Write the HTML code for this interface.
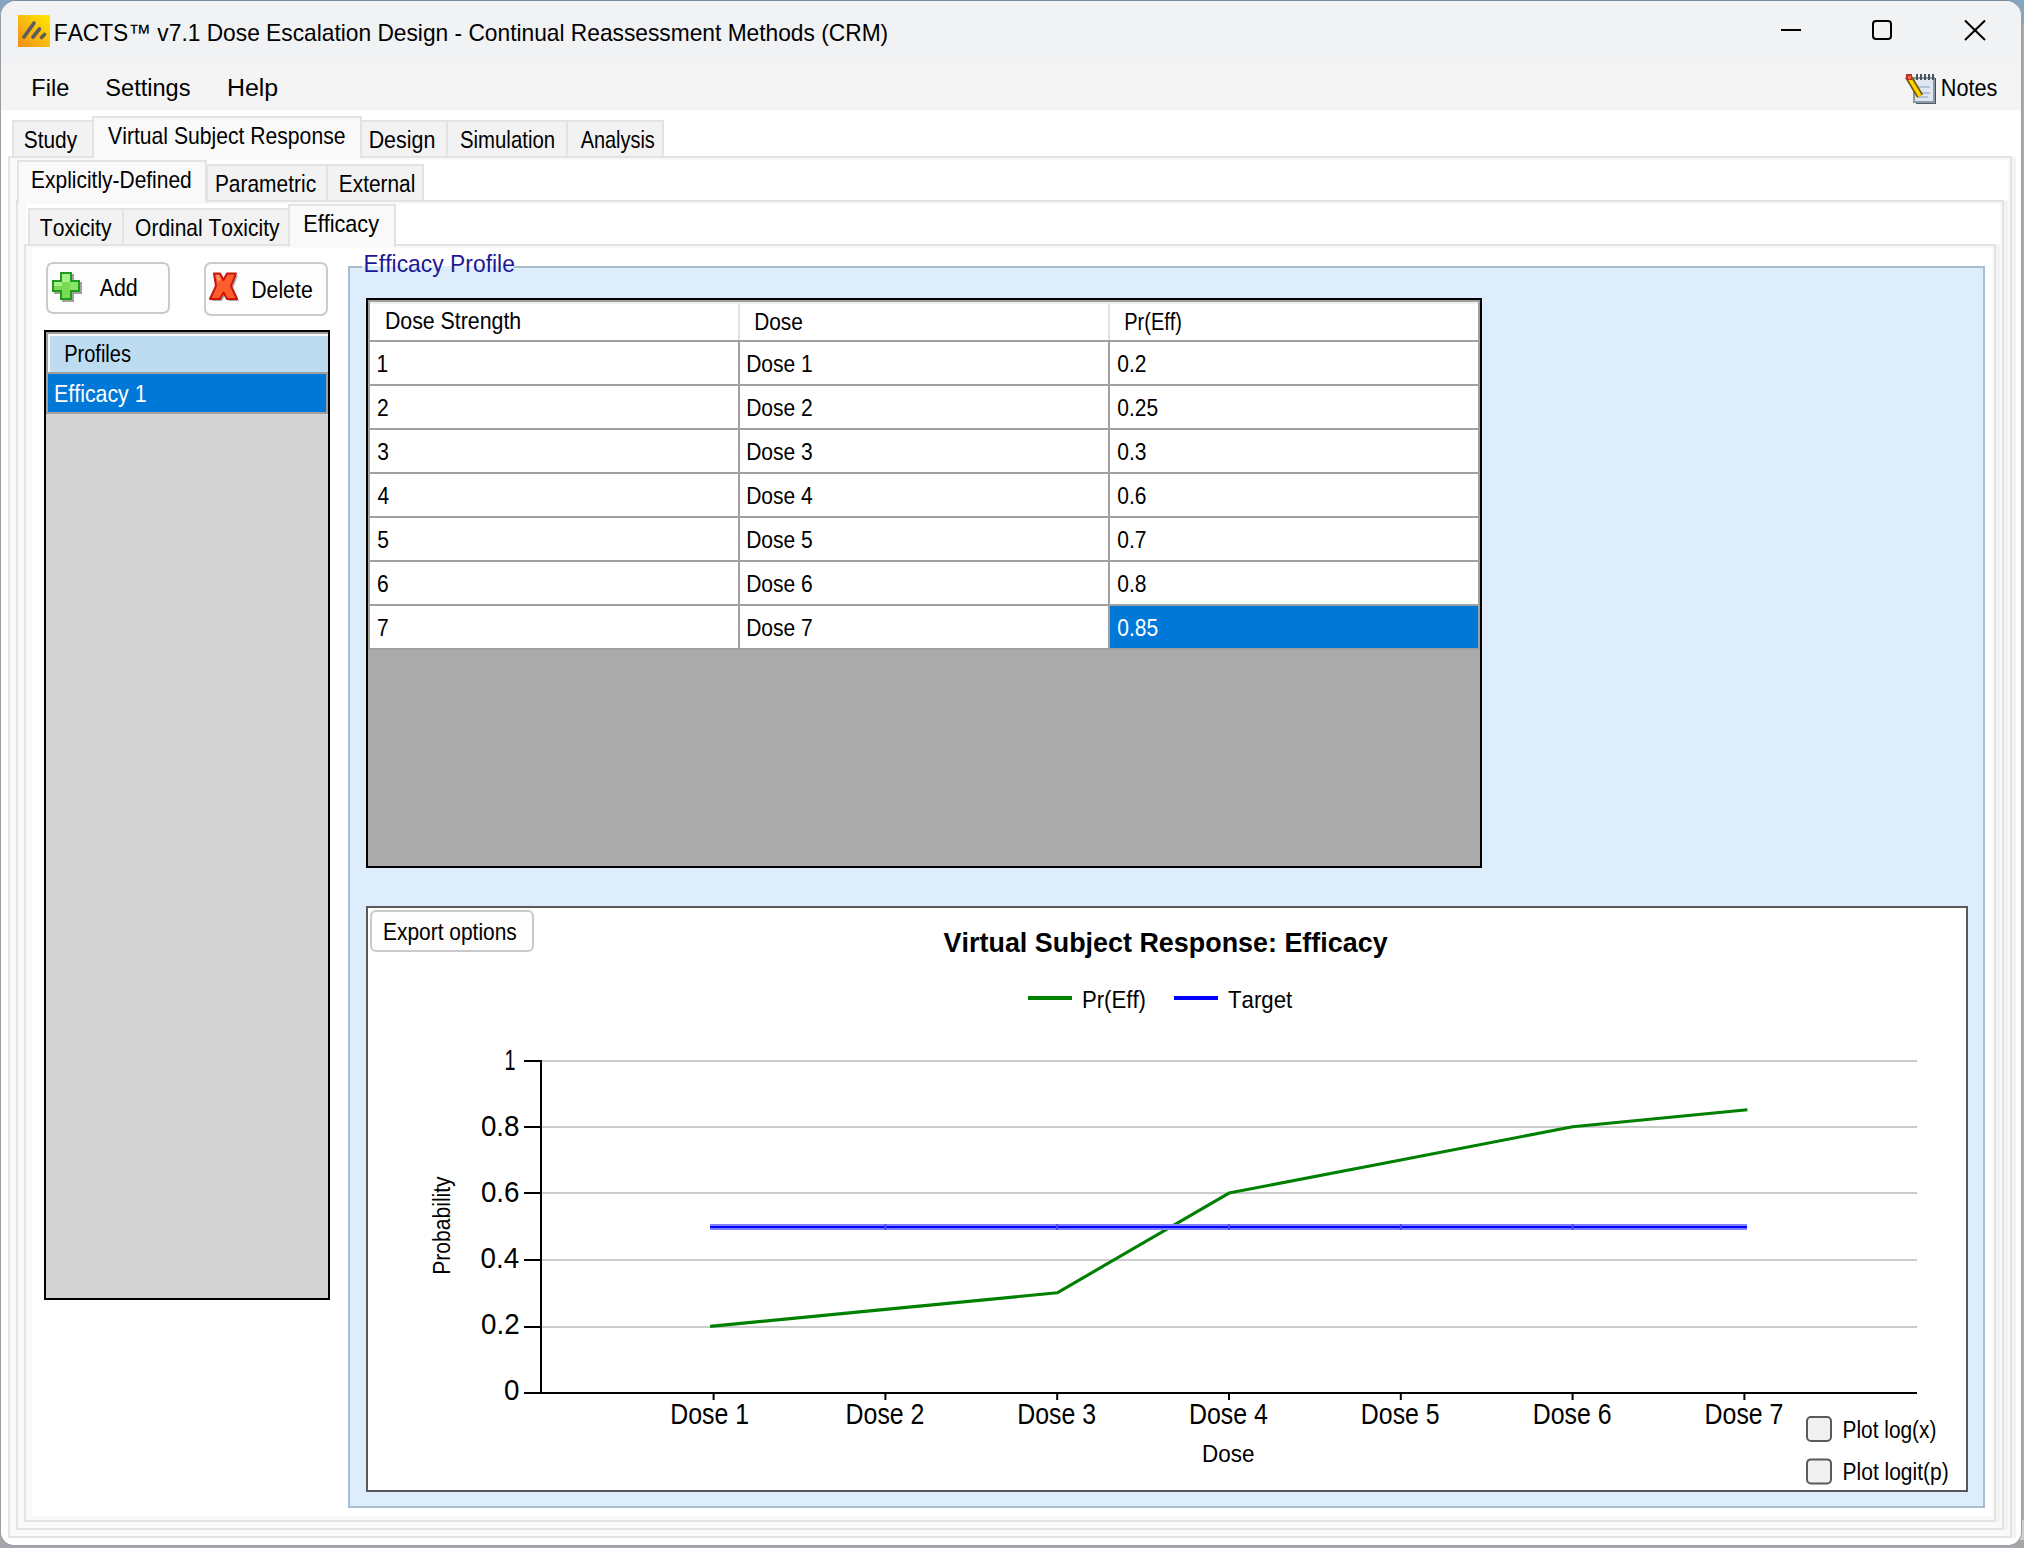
<!DOCTYPE html>
<html><head><meta charset="utf-8"><style>
html,body{margin:0;padding:0;width:2024px;height:1548px;overflow:hidden;position:relative;background:#8aa0b4}
svg text{font-family:"Liberation Sans",sans-serif;font-kerning:none;}
</style></head><body>
<div style="position:absolute;left:0px;top:0px;width:2024px;height:1548px;box-sizing:border-box;background:#aaaaaa;"></div>
<div style="position:absolute;left:0px;top:0px;width:2024px;height:24px;box-sizing:border-box;background:#86a6c0;"></div>
<div style="position:absolute;left:1990px;top:1520px;width:34px;height:28px;box-sizing:border-box;background:#cdcdcd;"></div>
<div style="position:absolute;left:0px;top:1540px;width:2024px;height:8px;box-sizing:border-box;background:#a4a8ac;"></div>
<div style="position:absolute;left:0;top:0;width:2022px;height:1546px;box-sizing:border-box;border:1.5px solid #9a9ea2;border-top-color:#77899a;border-radius:16px 16px 14px 14px;background:#fff;overflow:hidden"><div style="position:absolute;left:0;top:0;width:2024px;height:61px;background:#f1f2f4"></div><div style="position:absolute;left:0;top:61px;width:2024px;height:48px;background:#f4f4f4"></div></div>
<div style="position:absolute;left:8px;top:156px;width:2004px;height:1382px;box-sizing:border-box;background:#f9f9f9;border:2px solid #e3e3e3;"></div>
<div style="position:absolute;left:2012px;top:157px;width:4px;height:1381px;box-sizing:border-box;background:#f3f3f3;"></div>
<div style="position:absolute;left:12px;top:120px;width:82px;height:36px;box-sizing:border-box;background:#f2f2f2;border-left:2px solid #e3e3e3;border-top:2px solid #e3e3e3;border-right:2px solid #e3e3e3;"></div>
<div style="position:absolute;left:360px;top:120px;width:88px;height:36px;box-sizing:border-box;background:#f2f2f2;border-left:2px solid #e3e3e3;border-top:2px solid #e3e3e3;border-right:2px solid #e3e3e3;"></div>
<div style="position:absolute;left:446px;top:120px;width:122px;height:36px;box-sizing:border-box;background:#f2f2f2;border-left:2px solid #e3e3e3;border-top:2px solid #e3e3e3;border-right:2px solid #e3e3e3;"></div>
<div style="position:absolute;left:566px;top:120px;width:98px;height:36px;box-sizing:border-box;background:#f2f2f2;border-left:2px solid #e3e3e3;border-top:2px solid #e3e3e3;border-right:2px solid #e3e3e3;"></div>
<div style="position:absolute;left:92px;top:116px;width:270px;height:42px;box-sizing:border-box;background:#f9f9f9;border-left:2px solid #e3e3e3;border-top:2px solid #e3e3e3;border-right:2px solid #e3e3e3;"></div>
<div style="position:absolute;left:18px;top:160px;width:1990px;height:40px;box-sizing:border-box;background:#fff;"></div>
<div style="position:absolute;left:16px;top:200px;width:1988px;height:1330px;box-sizing:border-box;background:#f9f9f9;border:2px solid #e3e3e3;"></div>
<div style="position:absolute;left:2004px;top:201px;width:4px;height:1329px;box-sizing:border-box;background:#f3f3f3;"></div>
<div style="position:absolute;left:206px;top:164px;width:122px;height:36px;box-sizing:border-box;background:#f2f2f2;border-left:2px solid #e3e3e3;border-top:2px solid #e3e3e3;border-right:2px solid #e3e3e3;"></div>
<div style="position:absolute;left:326px;top:164px;width:98px;height:36px;box-sizing:border-box;background:#f2f2f2;border-left:2px solid #e3e3e3;border-top:2px solid #e3e3e3;border-right:2px solid #e3e3e3;"></div>
<div style="position:absolute;left:17px;top:160px;width:190px;height:43px;box-sizing:border-box;background:#f9f9f9;border-left:2px solid #e3e3e3;border-top:2px solid #e3e3e3;border-right:2px solid #e3e3e3;"></div>
<div style="position:absolute;left:26px;top:204px;width:1974px;height:40px;box-sizing:border-box;background:#fff;"></div>
<div style="position:absolute;left:24px;top:244px;width:1972px;height:1278px;box-sizing:border-box;background:#f9f9f9;border:2px solid #e3e3e3;"></div>
<div style="position:absolute;left:1996px;top:245px;width:4px;height:1277px;box-sizing:border-box;background:#f3f3f3;"></div>
<div style="position:absolute;left:32px;top:248px;width:1960px;height:1268px;box-sizing:border-box;background:#fff;"></div>
<div style="position:absolute;left:28px;top:208px;width:96px;height:36px;box-sizing:border-box;background:#f2f2f2;border-left:2px solid #e3e3e3;border-top:2px solid #e3e3e3;border-right:2px solid #e3e3e3;"></div>
<div style="position:absolute;left:122px;top:208px;width:168px;height:36px;box-sizing:border-box;background:#f2f2f2;border-left:2px solid #e3e3e3;border-top:2px solid #e3e3e3;border-right:2px solid #e3e3e3;"></div>
<div style="position:absolute;left:288px;top:204px;width:108px;height:43px;box-sizing:border-box;background:#f9f9f9;border-left:2px solid #e3e3e3;border-top:2px solid #e3e3e3;border-right:2px solid #e3e3e3;"></div>
<div style="position:absolute;left:46px;top:262px;width:124px;height:52px;box-sizing:border-box;background:#fdfdfd;border:2px solid #cbcbcb;border-radius:7px;"></div>
<div style="position:absolute;left:204px;top:262px;width:124px;height:54px;box-sizing:border-box;background:#fdfdfd;border:2px solid #cbcbcb;border-radius:7px;"></div>
<div style="position:absolute;left:44px;top:330px;width:286px;height:970px;box-sizing:border-box;background:#d3d3d3;border:2px solid #000;"></div>
<div style="position:absolute;left:46px;top:332px;width:282px;height:2px;box-sizing:border-box;background:#a0a0a0;"></div>
<div style="position:absolute;left:46px;top:332px;width:2px;height:82px;box-sizing:border-box;background:#a0a0a0;"></div>
<div style="position:absolute;left:48px;top:334px;width:280px;height:2px;box-sizing:border-box;background:#f8f8f8;"></div>
<div style="position:absolute;left:48px;top:334px;width:2px;height:38px;box-sizing:border-box;background:#f8f8f8;"></div>
<div style="position:absolute;left:50px;top:336px;width:278px;height:36px;box-sizing:border-box;background:#bddcf2;"></div>
<div style="position:absolute;left:46px;top:372px;width:282px;height:2px;box-sizing:border-box;background:#a0a0a0;"></div>
<div style="position:absolute;left:48px;top:374px;width:278px;height:38px;box-sizing:border-box;background:#0078d7;"></div>
<div style="position:absolute;left:326px;top:374px;width:2px;height:40px;box-sizing:border-box;background:#a0a0a0;"></div>
<div style="position:absolute;left:46px;top:412px;width:282px;height:2px;box-sizing:border-box;background:#a0a0a0;"></div>
<div style="position:absolute;left:348px;top:266px;width:1637px;height:1242px;box-sizing:border-box;background:#deedfc;border:2px solid #a9bcd1;"></div>
<div style="position:absolute;left:362px;top:264px;width:152px;height:5px;box-sizing:border-box;background:#deedfc;"></div>
<div style="position:absolute;left:362px;top:250px;width:152px;height:16px;box-sizing:border-box;background:#fff;"></div>
<div style="position:absolute;left:366px;top:298px;width:1116px;height:570px;box-sizing:border-box;background:#ababab;border:2px solid #000;"></div>
<div style="position:absolute;left:368px;top:300px;width:1112px;height:2px;box-sizing:border-box;background:#a0a0a0;"></div>
<div style="position:absolute;left:368px;top:300px;width:2px;height:350px;box-sizing:border-box;background:#a0a0a0;"></div>
<div style="position:absolute;left:1478px;top:300px;width:2px;height:350px;box-sizing:border-box;background:#a0a0a0;"></div>
<div style="position:absolute;left:370px;top:302px;width:1108px;height:38px;box-sizing:border-box;background:#ffffff;"></div>
<div style="position:absolute;left:370px;top:302px;width:1108px;height:2px;box-sizing:border-box;background:#f0f0f0;"></div>
<div style="position:absolute;left:738px;top:304px;width:2px;height:36px;box-sizing:border-box;background:#e2e2e2;"></div>
<div style="position:absolute;left:1108px;top:304px;width:2px;height:36px;box-sizing:border-box;background:#e2e2e2;"></div>
<div style="position:absolute;left:370px;top:340px;width:1108px;height:2px;box-sizing:border-box;background:#a0a0a0;"></div>
<div style="position:absolute;left:370px;top:342px;width:1108px;height:42px;box-sizing:border-box;background:#fff;"></div>
<div style="position:absolute;left:370px;top:384px;width:1108px;height:2px;box-sizing:border-box;background:#a0a0a0;"></div>
<div style="position:absolute;left:370px;top:386px;width:1108px;height:42px;box-sizing:border-box;background:#fff;"></div>
<div style="position:absolute;left:370px;top:428px;width:1108px;height:2px;box-sizing:border-box;background:#a0a0a0;"></div>
<div style="position:absolute;left:370px;top:430px;width:1108px;height:42px;box-sizing:border-box;background:#fff;"></div>
<div style="position:absolute;left:370px;top:472px;width:1108px;height:2px;box-sizing:border-box;background:#a0a0a0;"></div>
<div style="position:absolute;left:370px;top:474px;width:1108px;height:42px;box-sizing:border-box;background:#fff;"></div>
<div style="position:absolute;left:370px;top:516px;width:1108px;height:2px;box-sizing:border-box;background:#a0a0a0;"></div>
<div style="position:absolute;left:370px;top:518px;width:1108px;height:42px;box-sizing:border-box;background:#fff;"></div>
<div style="position:absolute;left:370px;top:560px;width:1108px;height:2px;box-sizing:border-box;background:#a0a0a0;"></div>
<div style="position:absolute;left:370px;top:562px;width:1108px;height:42px;box-sizing:border-box;background:#fff;"></div>
<div style="position:absolute;left:370px;top:604px;width:1108px;height:2px;box-sizing:border-box;background:#a0a0a0;"></div>
<div style="position:absolute;left:370px;top:606px;width:1108px;height:42px;box-sizing:border-box;background:#fff;"></div>
<div style="position:absolute;left:370px;top:648px;width:1108px;height:2px;box-sizing:border-box;background:#a0a0a0;"></div>
<div style="position:absolute;left:738px;top:342px;width:2px;height:308px;box-sizing:border-box;background:#a0a0a0;"></div>
<div style="position:absolute;left:1108px;top:342px;width:2px;height:308px;box-sizing:border-box;background:#a0a0a0;"></div>
<div style="position:absolute;left:1110px;top:606px;width:368px;height:42px;box-sizing:border-box;background:#0078d7;"></div>
<div style="position:absolute;left:366px;top:906px;width:1602px;height:586px;box-sizing:border-box;background:#fff;border:2px solid #595959;"></div>
<div style="position:absolute;left:370px;top:910px;width:164px;height:42px;box-sizing:border-box;background:#fdfdfd;border:2px solid #c9c9c9;border-radius:6px;"></div>
<svg style="position:absolute;left:0;top:0" width="2024" height="1548">
<defs><linearGradient id="ig" x1="0" y1="1" x2="1" y2="0"><stop offset="0" stop-color="#f48c1c"/><stop offset="1" stop-color="#ffec00"/></linearGradient></defs>
<rect x="18" y="15" width="32" height="32" fill="url(#ig)"/>
<g stroke="#5c5c5c" stroke-width="3.6" stroke-linecap="round"><line x1="24" y1="37" x2="34" y2="23"/><line x1="33" y1="37" x2="39.5" y2="29"/><line x1="41.5" y1="37.5" x2="44.5" y2="34.5"/></g>
<rect x="1781" y="29" width="20" height="2" fill="#000"/>
<rect x="1873" y="21" width="18" height="18" rx="3" fill="none" stroke="#000" stroke-width="2"/>
<g stroke="#000" stroke-width="2"><line x1="1965" y1="20.5" x2="1985" y2="40"/><line x1="1985" y1="20.5" x2="1965" y2="40"/></g>
<g transform="translate(1906,74)">
<rect x="26" y="4" width="4" height="26" fill="#3e4a54"/>
<rect x="10" y="26" width="20" height="4" fill="#4e5a64"/>
<rect x="8" y="4" width="20" height="24" fill="#dfe6f0"/>
<rect x="8" y="4" width="20" height="24" fill="none" stroke="#8d99a5" stroke-width="2"/>
<rect x="12" y="12" width="12" height="2" fill="#b4c4d8"/><rect x="12" y="18" width="12" height="2" fill="#b4c4d8"/><rect x="12" y="22" width="10" height="2" fill="#b4c4d8"/>
<g fill="#4a545e"><rect x="10" y="0" width="2" height="6"/><rect x="14" y="0" width="2" height="6"/><rect x="18" y="0" width="2" height="6"/><rect x="22" y="0" width="2" height="6"/><rect x="26" y="0" width="2" height="6"/></g>
<line x1="2" y1="2" x2="14" y2="22" stroke="#6e5200" stroke-width="7"/>
<line x1="2" y1="2" x2="14" y2="22" stroke="#ffd200" stroke-width="3.5"/>
<rect x="0" y="0" width="6" height="6" fill="#b8302a"/>
<rect x="2" y="2" width="3" height="3" fill="#ff6050"/>
</g>
<g transform="translate(52,272)">
<path d="M8 0h12v8h8v12h-8v8h-12v-8h-8v-12h8z" fill="#555" opacity="0.55" transform="translate(2,2)"/>
<path d="M8 0h12v8h8v12h-8v8h-12v-8h-8v-12h8z" fill="#1f9b1f"/>
<path d="M10 2h8v8h8v8h-8v8h-8v-8h-8v-8h8z" fill="#7ada52"/>
<path d="M10 2h8v8h-8zM2 10h8v4h-8z" fill="#a8f08a"/>
<path d="M18 10h8v8h-8z" fill="#8ae466"/>
</g>
<g transform="translate(210,272)">
<path d="M4 1.5H10L13.5 8L17 1.5H26L21 14L27 27H17L13.5 20.5L10 27H0L6 14Z" fill="#555" opacity="0.5" transform="translate(2,2)"/>
<path d="M4 1.5H10L13.5 8L17 1.5H26L21 14L27 27H17L13.5 20.5L10 27H0L6 14Z" fill="#ff5e2c" stroke="#c8160c" stroke-width="2" stroke-linejoin="round"/>
<path d="M5.5 3H9L11 7L8 10Z" fill="#ff9070"/>
</g>
<rect x="1028" y="996" width="44" height="4" fill="#008000"/>
<rect x="1174" y="996" width="44" height="4" fill="#0000ff"/>
<rect x="542" y="1060" width="1375" height="2" fill="#cccccc"/>
<rect x="524" y="1060" width="16" height="2" fill="#000"/>
<rect x="542" y="1126" width="1375" height="2" fill="#cccccc"/>
<rect x="524" y="1126" width="16" height="2" fill="#000"/>
<rect x="542" y="1192" width="1375" height="2" fill="#cccccc"/>
<rect x="524" y="1192" width="16" height="2" fill="#000"/>
<rect x="542" y="1259" width="1375" height="2" fill="#cccccc"/>
<rect x="524" y="1259" width="16" height="2" fill="#000"/>
<rect x="542" y="1326" width="1375" height="2" fill="#cccccc"/>
<rect x="524" y="1326" width="16" height="2" fill="#000"/>
<rect x="524" y="1392" width="16" height="2" fill="#000"/>
<rect x="540" y="1060" width="2" height="333" fill="#000"/>
<rect x="524" y="1392" width="1393" height="2" fill="#000"/>
<rect x="712.6" y="1393" width="2" height="7" fill="#000"/>
<rect x="884.4" y="1393" width="2" height="7" fill="#000"/>
<rect x="1056.2" y="1393" width="2" height="7" fill="#000"/>
<rect x="1228.0" y="1393" width="2" height="7" fill="#000"/>
<rect x="1399.8" y="1393" width="2" height="7" fill="#000"/>
<rect x="1571.6" y="1393" width="2" height="7" fill="#000"/>
<rect x="1743.4" y="1393" width="2" height="7" fill="#000"/>
<polyline points="710.1,1326.4 885.4,1309.4 1057.2,1292.8 1229.0,1193.1 1400.8,1159.9 1572.6,1126.7 1747.4,1109.8" fill="none" stroke="#008000" stroke-width="3.1" stroke-linejoin="round"/>
<rect x="710" y="1224" width="1037" height="6" fill="#8080ff"/>
<rect x="710" y="1226" width="1037" height="2" fill="#0000ff"/>
<rect x="884.4" y="1224" width="2" height="6" fill="#4848ff"/>
<rect x="1056.2" y="1224" width="2" height="6" fill="#4848ff"/>
<rect x="1228.0" y="1224" width="2" height="6" fill="#4848ff"/>
<rect x="1399.8" y="1224" width="2" height="6" fill="#4848ff"/>
<rect x="1571.6" y="1224" width="2" height="6" fill="#4848ff"/>
<rect x="1807" y="1417.0" width="24" height="24" rx="4" fill="#f0f0f0" stroke="#5a5a5a" stroke-width="2"/>
<rect x="1807" y="1459.4" width="24" height="24" rx="4" fill="#f0f0f0" stroke="#5a5a5a" stroke-width="2"/>
<text transform="translate(53.73,40.90) scale(0.9485,1)" font-size="24" fill="#000">FACTS™ v7.1 Dose Escalation Design - Continual Reassessment Methods (CRM)</text>
<text transform="translate(31.37,95.60) scale(0.9793,1)" font-size="24" fill="#000">File</text>
<text transform="translate(105.33,95.60) scale(0.9828,1)" font-size="24" fill="#000">Settings</text>
<text transform="translate(226.95,95.60) scale(1.0392,1)" font-size="24" fill="#000">Help</text>
<text transform="translate(1940.82,95.90) scale(0.9038,1)" font-size="24" fill="#000">Notes</text>
<text transform="translate(23.75,148.00) scale(0.8699,1)" font-size="24" fill="#000">Study</text>
<text transform="translate(108.11,143.80) scale(0.8811,1)" font-size="24" fill="#000">Virtual Subject Response</text>
<text transform="translate(368.64,147.70) scale(0.8935,1)" font-size="24" fill="#000">Design</text>
<text transform="translate(459.97,147.70) scale(0.8491,1)" font-size="24" fill="#000">Simulation</text>
<text transform="translate(580.66,147.70) scale(0.8298,1)" font-size="24" fill="#000">Analysis</text>
<text transform="translate(31.08,187.80) scale(0.8734,1)" font-size="24" fill="#000">Explicitly-Defined</text>
<text transform="translate(214.88,191.80) scale(0.8728,1)" font-size="24" fill="#000">Parametric</text>
<text transform="translate(338.79,191.80) scale(0.8701,1)" font-size="24" fill="#000">External</text>
<text transform="translate(39.83,236.10) scale(0.8805,1)" font-size="24" fill="#000">Toxicity</text>
<text transform="translate(135.11,236.10) scale(0.8734,1)" font-size="24" fill="#000">Ordinal Toxicity</text>
<text transform="translate(303.22,231.70) scale(0.9024,1)" font-size="24" fill="#000">Efficacy</text>
<text transform="translate(99.66,296.00) scale(0.8927,1)" font-size="24" fill="#000">Add</text>
<text transform="translate(251.15,297.80) scale(0.8879,1)" font-size="24" fill="#000">Delete</text>
<text transform="translate(64.15,361.80) scale(0.8356,1)" font-size="24" fill="#000">Profiles</text>
<text transform="translate(54.05,401.90) scale(0.8900,1)" font-size="24" fill="#fff">Efficacy 1</text>
<text transform="translate(363.62,271.60) scale(0.9532,1)" font-size="24" fill="#1f1896">Efficacy Profile</text>
<text transform="translate(384.95,329.30) scale(0.8886,1)" font-size="24" fill="#000">Dose Strength</text>
<text transform="translate(754.19,329.50) scale(0.8699,1)" font-size="24" fill="#000">Dose</text>
<text transform="translate(1124.26,329.70) scale(0.8334,1)" font-size="24" fill="#000">Pr(Eff)</text>
<text transform="translate(376.40,371.60) scale(0.8751,1)" font-size="24" fill="#000">1</text>
<text transform="translate(746.18,371.60) scale(0.8751,1)" font-size="24" fill="#000">Dose 1</text>
<text transform="translate(1117.28,371.60) scale(0.8751,1)" font-size="24" fill="#000">0.2</text>
<text transform="translate(376.94,415.60) scale(0.8751,1)" font-size="24" fill="#000">2</text>
<text transform="translate(746.18,415.60) scale(0.8751,1)" font-size="24" fill="#000">Dose 2</text>
<text transform="translate(1117.28,415.60) scale(0.8751,1)" font-size="24" fill="#000">0.25</text>
<text transform="translate(377.20,459.60) scale(0.8751,1)" font-size="24" fill="#000">3</text>
<text transform="translate(746.18,459.60) scale(0.8751,1)" font-size="24" fill="#000">Dose 3</text>
<text transform="translate(1117.28,459.60) scale(0.8751,1)" font-size="24" fill="#000">0.3</text>
<text transform="translate(377.52,503.60) scale(0.8751,1)" font-size="24" fill="#000">4</text>
<text transform="translate(746.18,503.60) scale(0.8751,1)" font-size="24" fill="#000">Dose 4</text>
<text transform="translate(1117.28,503.60) scale(0.8751,1)" font-size="24" fill="#000">0.6</text>
<text transform="translate(377.16,547.60) scale(0.8751,1)" font-size="24" fill="#000">5</text>
<text transform="translate(746.18,547.60) scale(0.8751,1)" font-size="24" fill="#000">Dose 5</text>
<text transform="translate(1117.28,547.60) scale(0.8751,1)" font-size="24" fill="#000">0.7</text>
<text transform="translate(376.93,591.60) scale(0.8751,1)" font-size="24" fill="#000">6</text>
<text transform="translate(746.18,591.60) scale(0.8751,1)" font-size="24" fill="#000">Dose 6</text>
<text transform="translate(1117.28,591.60) scale(0.8751,1)" font-size="24" fill="#000">0.8</text>
<text transform="translate(376.92,635.60) scale(0.8751,1)" font-size="24" fill="#000">7</text>
<text transform="translate(746.18,635.60) scale(0.8751,1)" font-size="24" fill="#000">Dose 7</text>
<text transform="translate(1117.28,635.60) scale(0.8751,1)" font-size="24" fill="#fff">0.85</text>
<text transform="translate(383.08,939.80) scale(0.8719,1)" font-size="24" fill="#000">Export options</text>
<text transform="translate(943.62,951.60) scale(0.9444,1)" font-size="28.5" fill="#000" font-weight="bold">Virtual Subject Response: Efficacy</text>
<text transform="translate(1081.88,1007.50) scale(0.9245,1)" font-size="24" fill="#000">Pr(Eff)</text>
<text transform="translate(1228.00,1007.50) scale(0.9250,1)" font-size="24" fill="#000">Target</text>
<text transform="translate(504.50,1070.00) scale(0.6798,1)" font-size="29" fill="#000">1</text>
<text transform="translate(480.93,1136.00) scale(0.9570,1)" font-size="29" fill="#000">0.8</text>
<text transform="translate(480.94,1202.00) scale(0.9570,1)" font-size="29" fill="#000">0.6</text>
<text transform="translate(480.53,1268.00) scale(0.9570,1)" font-size="29" fill="#000">0.4</text>
<text transform="translate(481.12,1334.00) scale(0.9570,1)" font-size="29" fill="#000">0.2</text>
<text transform="translate(503.95,1400.00) scale(0.9570,1)" font-size="29" fill="#000">0</text>
<text transform="translate(670.26,1424.30) scale(0.8582,1)" font-size="29" fill="#000">Dose 1</text>
<text transform="translate(845.58,1424.30) scale(0.8582,1)" font-size="29" fill="#000">Dose 2</text>
<text transform="translate(1017.30,1424.30) scale(0.8582,1)" font-size="29" fill="#000">Dose 3</text>
<text transform="translate(1188.92,1424.30) scale(0.8582,1)" font-size="29" fill="#000">Dose 4</text>
<text transform="translate(1360.87,1424.30) scale(0.8582,1)" font-size="29" fill="#000">Dose 5</text>
<text transform="translate(1532.70,1424.30) scale(0.8582,1)" font-size="29" fill="#000">Dose 6</text>
<text transform="translate(1704.58,1424.30) scale(0.8582,1)" font-size="29" fill="#000">Dose 7</text>
<text transform="translate(1201.96,1461.50) scale(0.9360,1)" font-size="24" fill="#000">Dose</text>
<text transform="translate(449.80,1273.00) rotate(-90) scale(0.8779,1)" x="-1.97" y="0" font-size="24" fill="#000">Probability</text>
<text transform="translate(1842.59,1437.60) scale(0.8692,1)" font-size="24" fill="#000">Plot log(x)</text>
<text transform="translate(1842.58,1479.60) scale(0.8743,1)" font-size="24" fill="#000">Plot logit(p)</text>
</svg>
</body></html>
